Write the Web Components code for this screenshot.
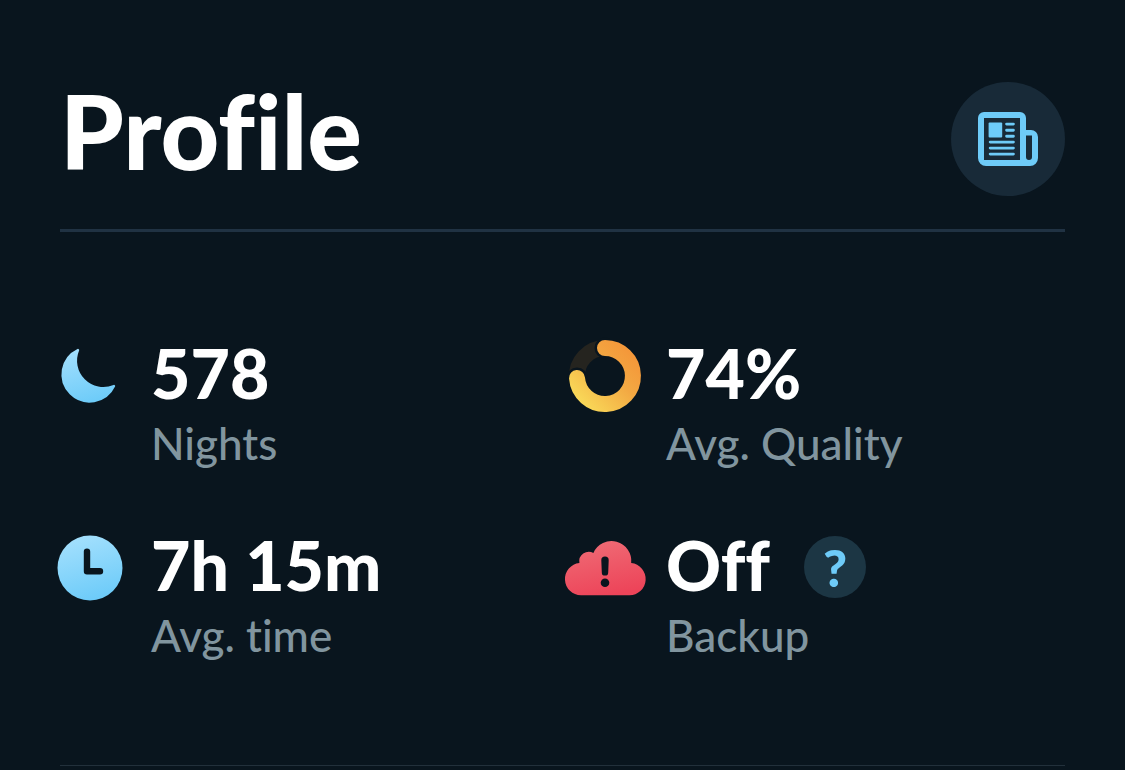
<!DOCTYPE html>
<html lang="en">
<head>
<meta charset="utf-8">
<meta name="viewport" content="width=device-width, initial-scale=1">
<title>Profile</title>
<style>
  body { margin: 0; background: #09151e; color: #fff; font-family: Lato, "Open Sans", sans-serif; font-variant-ligatures: none; }
</style>
</head>
<body>
<profile-page>
  <profile-header slot="header">Profile</profile-header>
  <stat-item icon="moon">
    <span slot="value">578</span><span slot="label">Nights</span>
  </stat-item>
  <stat-item icon="ring">
    <span slot="value">74%</span><span slot="label">Avg. Quality</span>
  </stat-item>
  <stat-item icon="clock">
    <span slot="value">7h 15m</span><span slot="label">Avg. time</span>
  </stat-item>
  <stat-item icon="cloud">
    <span slot="value">Off</span><help-button slot="action"></help-button><span slot="label">Backup</span>
  </stat-item>
</profile-page>

<script>
const ICONS = {
  moon: `
    <defs><linearGradient id="g" gradientUnits="userSpaceOnUse" x1="24" y1="12" x2="40" y2="68"><stop stop-color="#a4e0fd"/><stop offset="1" stop-color="#6ccbf9"/></linearGradient></defs>
    <path d="M28 14A27 27 0 1 0 64 50A27.5 27.5 0 0 1 28 14Z" fill="url(#g)" stroke="url(#g)" stroke-width="2.4" stroke-linejoin="round"/>`,
  ring: `
    <defs><linearGradient id="g" gradientUnits="userSpaceOnUse" x1="62" y1="14" x2="12" y2="62"><stop stop-color="#f4983a"/><stop offset=".4" stop-color="#f3a943"/><stop offset="1" stop-color="#f9d858"/></linearGradient></defs>
    <g fill="none" stroke-linecap="round">
      <path d="M12 42A28 28 0 0 1 40 12" stroke="#25241f" stroke-width="16" stroke-linecap="butt"/>
      <path d="M40 12h.1M12 42h.1" stroke="#09151e" stroke-width="21"/>
      <path d="M40 12A28 28 0 1 1 12 42" stroke="url(#g)" stroke-width="16"/>
    </g>`,
  clock: `
    <defs><linearGradient id="g" x1=".3" y1="0" x2=".6" y2="1"><stop stop-color="#a4e0fd"/><stop offset="1" stop-color="#6ccbf9"/></linearGradient></defs>
    <circle cx="40" cy="40" r="32.5" fill="url(#g)"/>
    <path d="M37 23.6V43.2H50" fill="none" stroke="#09151e" stroke-width="6.4" stroke-linecap="round" stroke-linejoin="round"/>`,
  cloud: `
    <defs><linearGradient id="g" gradientUnits="userSpaceOnUse" x1="30" y1="12" x2="42" y2="68"><stop stop-color="#ef6b75"/><stop offset="1" stop-color="#ed4459"/></linearGradient></defs>
    <path d="M16 67.3A16.2 16.2 0 0 1 14.4 35A9.6 9.6 0 0 1 28.4 24.9A19.8 19.8 0 0 1 66.2 35A16.2 16.2 0 0 1 64 67.3Z" fill="url(#g)"/>
    <path d="M36.3 32.2a3.7 3.7 0 0 1 7.4 0l-.5 12.2a3.2 3.2 0 0 1-6.4 0Z" fill="#09151e"/>
    <circle cx="40" cy="54.7" r="4.3" fill="#09151e"/>`
};

class ProfilePage extends HTMLElement {
  constructor() {
    super();
    this.attachShadow({ mode: "open" }).innerHTML = `
      <style>
        :host { display: block; padding: 82px 60px 0; }
        .stats {
          display: grid; grid-template-columns: 1fr 1fr; row-gap: 62px;
          margin: 105px -15px 0 -10px; padding-bottom: 106px;
        }
        hr { margin: 0; border: 0; border-top: 1px solid #22303b; }
      </style>
      <main>
        <slot name="header"></slot>
        <section class="stats" aria-label="Sleep statistics"><slot></slot></section>
        <hr>
      </main>`;
  }
}

class ProfileHeader extends HTMLElement {
  constructor() {
    super();
    this.attachShadow({ mode: "open" }).innerHTML = `
      <style>
        :host { display: block; }
        header { display: flex; justify-content: space-between; align-items: flex-start; padding-bottom: 33px; border-bottom: 3px solid #203243; }
        h1 { margin: 0; font-size: 102px; line-height: 98px; font-weight: 900; }
      </style>
      <header><h1><slot></slot></h1><news-button></news-button></header>`;
  }
}

class NewsButton extends HTMLElement {
  constructor() {
    super();
    this.attachShadow({ mode: "open" }).innerHTML = `
      <style>
        :host { display: block; }
        button { display: grid; place-items: center; width: 114px; height: 114px; padding: 0; border: 0; border-radius: 50%; background: #182a38; cursor: pointer; }
        svg { display: block; }
      </style>
      <button type="button" aria-label="News">
        <svg width="60" height="54" viewBox="0 0 60 54" fill="none" stroke="#6ecbf8" aria-hidden="true">
          <path d="M6 0H42A6 6 0 0 1 48 6V18H53A7 7 0 0 1 60 25V46A8 8 0 0 1 52 54H8A8 8 0 0 1 0 46V6A6 6 0 0 1 6 0ZM6 6V48H42V6ZM48 23.5V45a3 3 0 0 0 6 0V23.5Z" fill="#6ecbf8" fill-rule="evenodd" stroke="none"/>
          <rect x="10.6" y="10.4" width="13.6" height="15.2" rx="1" fill="#6ecbf8" stroke="none"/>
          <path d="M28.6 12.1H35.4M28.6 18.2H35.4M28.6 24.2H35.4M12.2 30.1H35.4M12.2 36.1H35.4M12.2 42.1H35.4" stroke-width="2.9" stroke-linecap="round"/>
        </svg>
      </button>`;
  }
}

class HelpButton extends HTMLElement {
  constructor() {
    super();
    this.attachShadow({ mode: "open" }).innerHTML = `
      <style>
        :host { display: block; }
        button { display: grid; place-items: center; width: 62px; height: 62px; padding: 0; border: 0; border-radius: 50%; background: #1c3644; color: #6ecbf8; font: 900 52px/62px Lato, "Open Sans", sans-serif; cursor: pointer; }
      </style>
      <button type="button" title="About backup">?</button>`;
  }
}

class StatItem extends HTMLElement {
  constructor() {
    super();
    this.attachShadow({ mode: "open" });
  }
  connectedCallback() {
    this.shadowRoot.innerHTML = `
      <style>
        :host { display: flex; align-items: flex-start; gap: 21px; min-width: 0; }
        .icon { display: flex; align-items: center; flex: none; height: 78px; }
        svg { display: block; overflow: visible; }
        .text { display: grid; gap: 10px; }
        .value { display: flex; align-items: center; gap: 34px; height: 72px; font-size: 68px; line-height: 72px; font-weight: 900; white-space: nowrap; }
        ::slotted([slot="action"]) { margin-top: 4px; }
        .label { color: #81959f; font-size: 44px; line-height: 48px; font-weight: 500; white-space: nowrap; }
      </style>
      <div class="icon"><svg width="80" height="80" viewBox="0 0 80 80" aria-hidden="true">${ICONS[this.getAttribute("icon")]}</svg></div>
      <div class="text">
        <div class="value"><slot name="value"></slot><slot name="action"></slot></div>
        <div class="label"><slot name="label"></slot></div>
      </div>`;
  }
}

customElements.define("news-button", NewsButton);
customElements.define("help-button", HelpButton);
customElements.define("profile-header", ProfileHeader);
customElements.define("stat-item", StatItem);
customElements.define("profile-page", ProfilePage);
</script>
</body>
</html>
